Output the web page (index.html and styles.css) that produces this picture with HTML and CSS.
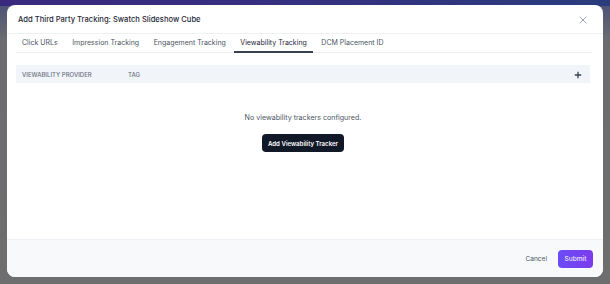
FILE: index.html
```html
<!DOCTYPE html>
<html lang="en">
<head>
    <meta charset="UTF-8">
    <meta name="viewport" content="width=device-width, initial-scale=1.0">
    <title>Add Third Party Tracking</title>
    <link rel="stylesheet" href="styles.css">
</head>
<body>
    <div class="overlay">
        <div class="modal">
            <div class="modal-header">
                <h3 class="modal-title">Add Third Party Tracking: Swatch Slideshow Cube</h3>
                <button class="close-btn" aria-label="Close">
                    <svg width="8" height="8" viewBox="0 0 8 8"><path d="M1 1L7 7M7 1L1 7" stroke="#9ca3af" stroke-width="1" stroke-linecap="round"/></svg>
                </button>
            </div>

            <div class="tabs">
                <div class="tab">Click URLs</div>
                <div class="tab">Impression Tracking</div>
                <div class="tab">Engagement Tracking</div>
                <div class="tab active">Viewability Tracking</div>
                <div class="tab">DCM Placement ID</div>
            </div>

            <div class="modal-body">
                <div class="table-head">
                    <div class="col-provider">Viewability Provider</div>
                    <div class="col-tag">Tag</div>
                    <button class="add-icon" aria-label="Add">
                        <svg width="8" height="8" viewBox="0 0 8 8"><path d="M4 0.8V7.2M0.8 4H7.2" stroke="#374151" stroke-width="1.3"/></svg>
                    </button>
                </div>

                <div class="empty">
                    <p class="empty-text">No viewability trackers configured.</p>
                    <button class="btn-dark">Add Viewability Tracker</button>
                </div>
            </div>

            <div class="modal-footer">
                <button class="btn-cancel">Cancel</button>
                <button class="btn-submit">Submit</button>
            </div>
        </div>
    </div>
</body>
</html>
```

FILE: styles.css
```css
body {
    font-family: Inter, "Noto Sans", Arial, sans-serif;
    margin: 0;
    padding: 0;
    height: 284px;
    overflow: hidden;
    background:
        linear-gradient(90deg, #3a2a7e 0%, #35307f 50%, #2a3c7c 100%) top / 100% 6px no-repeat,
        linear-gradient(180deg, #4a4f78 0px, #6c6c70 40px, #6e6e6e 100%);
}

.overlay {
    padding: 5px 7px 0 7px;
}

.modal {
    height: 272px;
    background-color: #fff;
    border-radius: 8px;
    display: flex;
    flex-direction: column;
    overflow: hidden;
}

.modal-header {
    height: 28px;
    display: flex;
    align-items: center;
    justify-content: space-between;
    padding: 0 15px 0 11px;
    border-bottom: 1px solid #eef0f3;
}

.modal-title {
    margin: 0;
    font-size: 7.6px;
    font-weight: 500;
    color: #1f2937;
    padding-top: 1px;
}

.close-btn {
    background: none;
    border: none;
    padding: 0;
    width: 10px;
    height: 10px;
    display: flex;
    align-items: center;
    justify-content: center;
    margin-top: 1px;
}

.tabs {
    display: flex;
    gap: 2.5px;
    margin: 0 11px 0 9px;
    border-bottom: 1px solid #eceef2;
    height: 18px;
}

.tab {
    padding: 0 6px;
    font-size: 7px;
    color: #4b5563;
    line-height: 17px;
    border-bottom: 2px solid transparent;
    margin-bottom: -1px;
    white-space: nowrap;
}

.tab.active {
    color: #1f2937;
    border-bottom-color: #374151;
}

.modal-body {
    flex: 1;
    padding: 12px 13px 0 9px;
}

.table-head {
    height: 18px;
    background-color: #f1f4f8;
    display: flex;
    align-items: center;
    padding: 0 7px 0 6px;
    font-size: 6px;
    font-weight: 500;
    text-transform: uppercase;
    color: #6b7280;
}

.col-provider {
    width: 106px;
}

.col-tag {
    flex: 1;
}

.add-icon {
    background: none;
    border: none;
    padding: 0;
    width: 8px;
    height: 8px;
    display: flex;
    margin: 1px 1px 0 0;
}

.empty {
    display: flex;
    flex-direction: column;
    align-items: center;
    padding-top: 30px;
}

.empty-text {
    margin: 0;
    font-size: 7.1px;
    color: #4b5563;
    line-height: 10px;
}

.btn-dark {
    margin-top: 11px;
    height: 18px;
    width: 82px;
    border: none;
    border-radius: 4px;
    background-color: #111827;
    color: #fff;
    font-family: inherit;
    font-size: 6.1px;
    font-weight: 600;
    padding: 0;
}

.modal-footer {
    height: 37px;
    background-color: #f8f9fb;
    border-top: 1px solid #eef1f6;
    display: flex;
    align-items: center;
    justify-content: flex-end;
    gap: 5px;
    padding: 0 10px 0 0;
}

.btn-cancel {
    background: none;
    border: none;
    font-family: inherit;
    font-size: 6.6px;
    color: #4b5563;
    padding: 0 6px;
    height: 18px;
}

.btn-submit {
    height: 18px;
    width: 35px;
    border: none;
    border-radius: 4px;
    background: linear-gradient(90deg, #6b4cf6, #7c3aed);
    color: #e9e3ff;
    font-family: inherit;
    font-size: 6.6px;
    font-weight: 500;
    padding: 0;
}
```
